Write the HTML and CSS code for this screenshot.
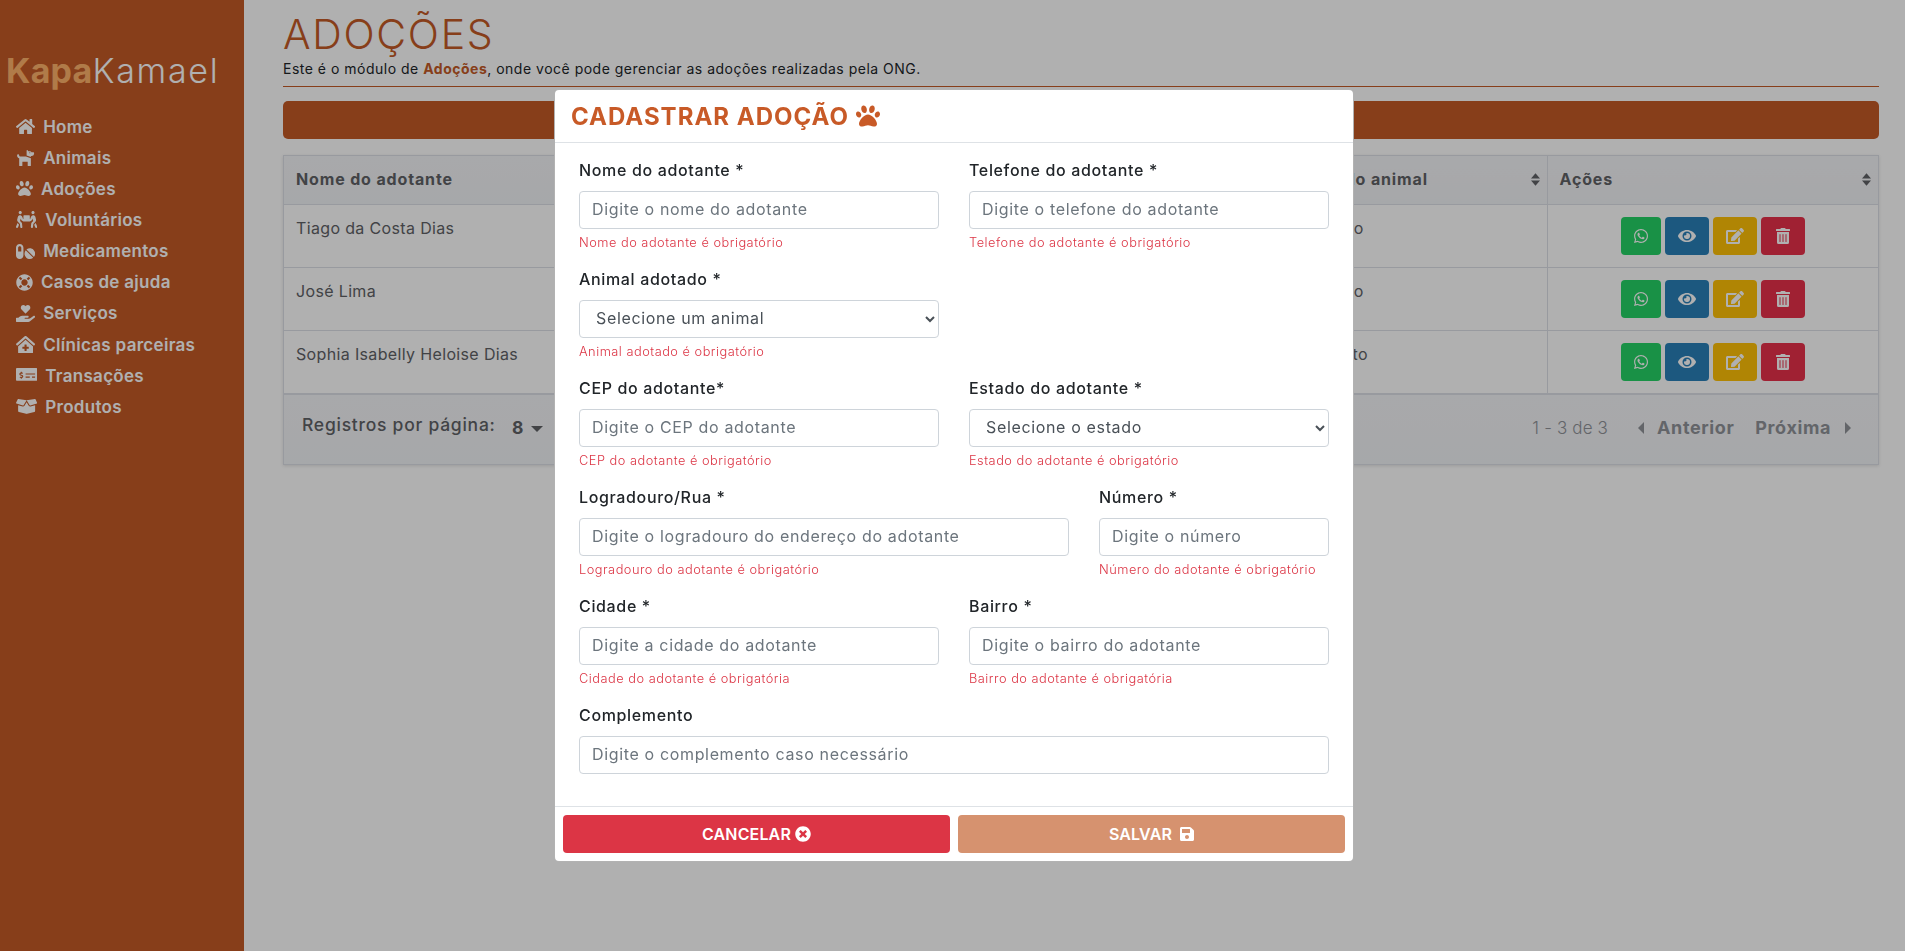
FILE: index.html
```html
<!DOCTYPE html>
<html lang="pt-BR">
<head>
  <meta charset="UTF-8" />
  <title>KapaKamael - Adoções</title>
  <link rel="stylesheet" href="styles.css">
</head>
<body>
  <svg class="sprite" xmlns="http://www.w3.org/2000/svg">
    <symbol id="i-paw" viewBox="0 0 512 512"><path d="M256 224c-79.41 0-192 122.76-192 200.25 0 34.9 26.81 55.75 71.74 55.75 48.84 0 81.09-25.08 120.26-25.08 39.51 0 71.85 25.08 120.26 25.08 44.93 0 71.74-20.85 71.74-55.75C448 346.76 335.41 224 256 224zm-147.28-12.61c-10.4-34.65-42.44-57.09-71.56-50.13-29.12 6.96-44.29 40.69-33.89 75.34 10.4 34.65 42.44 57.09 71.56 50.13 29.12-6.96 44.29-40.69 33.89-75.34zm84.72-20.78c30.94-8.14 46.42-49.94 34.58-93.36s-46.52-72.01-77.46-63.87-46.42 49.94-34.58 93.36c11.84 43.42 46.52 72.01 77.46 63.87zm281.39-29.34c-29.12-6.96-61.15 15.48-71.56 50.13-10.4 34.65 4.77 68.38 33.89 75.34 29.12 6.96 61.15-15.48 71.56-50.13 10.4-34.65-4.77-68.38-33.89-75.34zm-156.27 29.34c30.94 8.14 65.62-20.45 77.46-63.87 11.84-43.42-3.64-85.21-34.58-93.36s-65.62 20.45-77.46 63.87c-11.84 43.42 3.64 85.22 34.58 93.36z"/></symbol>
    <symbol id="i-home" viewBox="0 0 576 512"><path d="M280.37 148.26L96 300.11V464a16 16 0 0 0 16 16l112.06-.29a16 16 0 0 0 15.92-16V368a16 16 0 0 1 16-16h64a16 16 0 0 1 16 16v95.64a16 16 0 0 0 16 16.05L464 480a16 16 0 0 0 16-16V300L295.67 148.26a12.19 12.19 0 0 0-15.3 0zM571.6 251.47L488 182.56V44.05a12 12 0 0 0-12-12h-56a12 12 0 0 0-12 12v72.61L318.47 43a48 48 0 0 0-61 0L4.34 251.47a12 12 0 0 0-1.6 16.9l25.5 31A12 12 0 0 0 45.15 301l235.22-193.74a12.19 12.19 0 0 1 15.3 0L530.9 301a12 12 0 0 0 16.9-1.6l25.5-31a12 12 0 0 0-1.7-16.93z"/></symbol>
    <symbol id="i-dog" viewBox="0 0 576 512"><path d="M298.06,224,448,277.55V496a16,16,0,0,1-16,16H368a16,16,0,0,1-16-16V384H192V496a16,16,0,0,1-16,16H112a16,16,0,0,1-16-16V282.09C58.84,268.84,32,233.66,32,192a32,32,0,0,1,64,0,32.06,32.06,0,0,0,32,32ZM544,112v32a64,64,0,0,1-64,64H448v35.58L320,197.87V48c0-14.25,17.22-21.39,27.31-11.31L374.59,64h53.63c10.91,0,23.75,7.92,28.62,17.69L464,96h64A16,16,0,0,1,544,112Zm-112,0a16,16,0,1,0-16,16A16,16,0,0,0,432,112Z"/></symbol>
    <symbol id="i-people" viewBox="0 0 640 512"><path d="M128 96c26.5 0 48-21.5 48-48S154.5 0 128 0 80 21.5 80 48s21.5 48 48 48zm384 0c26.5 0 48-21.5 48-48S538.5 0 512 0s-48 21.5-48 48 21.5 48 48 48zm125.7 372.1l-44-110-41.1 46.4-2 18.2 27.7 69.2c5 12.5 17 20.1 29.7 20.1 4 0 8-.7 11.9-2.3 16.4-6.6 24.4-25.2 17.8-41.6zm-34.2-209.8L585 178.1c-4.6-20-18.6-36.8-37.5-44.9-18.5-8-39-6.7-56.1 3.3-22.7 13.4-39.7 34.5-48.1 59.4L432 229.8 416 240v-96c0-8.8-7.2-16-16-16H240c-8.8 0-16 7.2-16 16v96l-16.1-10.2-11.3-33.9c-8.3-25-25.4-46-48.1-59.4-17.2-10-37.6-11.3-56.1-3.3-18.9 8.1-32.9 24.9-37.5 44.9l-18.4 80.2c-4.6 20 .7 41.2 14.4 56.7l67.2 75.9 10.1 92.6C130 499.8 143.8 512 160 512c1.2 0 2.3-.1 3.5-.2 17.6-1.9 30.2-17.7 28.3-35.3l-10.1-92.8c-1.5-13-6.9-25.1-15.6-35l-43.3-49 17.6-70.3 6.8 20.4c4.1 12.5 11.9 23.4 24.5 32.6l51.1 32.5c4.6 2.9 12.1 4.6 17.2 5h160c5.1-.4 12.6-2.1 17.2-5l51.1-32.5c12.6-9.2 20.4-20 24.5-32.6l6.8-20.4 17.6 70.3-43.3 49c-8.7 9.9-14.1 22-15.6 35l-10.1 92.8c-1.9 17.6 10.8 33.4 28.3 35.3 1.2.1 2.3.2 3.5.2 16.1 0 30-12.1 31.8-28.5l10.1-92.6 67.2-75.9c13.6-15.5 19-36.7 14.4-56.7zM46.3 358.1l-44 110c-6.6 16.4 1.4 35 17.8 41.6 16.8 6.6 35.1-1.7 41.6-17.8l27.7-69.2-2-18.2-41.1-46.4z"/></symbol>
    <symbol id="i-pills" viewBox="0 0 576 512"><path d="M112 32C50.1 32 0 82.1 0 144v224c0 61.9 50.1 112 112 112s112-50.1 112-112V144c0-61.9-50.1-112-112-112zm48 224H64V144c0-26.5 21.5-48 48-48s48 21.5 48 48v112zm139.7-29.7c-3.5-3.5-9.4-3.1-12.3.8-45.3 62.5-40.4 150.1 15.9 206.4 56.3 56.3 143.9 61.2 206.4 15.9 4-2.9 4.3-8.8.8-12.3L299.7 226.3zm229.8-19c-56.3-56.3-143.9-61.2-206.4-15.9-4 2.9-4.3 8.8-.8 12.3l210.8 210.8c3.5 3.5 9.4 3.1 12.3-.8 45.3-62.6 40.5-150.1-15.9-206.4z"/></symbol>
    <symbol id="i-ring" viewBox="0 0 512 512"><path d="M256 8C119.033 8 8 119.033 8 256s111.033 248 248 248 248-111.033 248-248S392.967 8 256 8zm173.696 119.559l-63.399 63.399c-10.987-18.559-26.67-34.252-45.255-45.255l63.399-63.399a218.396 218.396 0 0 1 45.255 45.255zM256 352c-53.019 0-96-42.981-96-96s42.981-96 96-96 96 42.981 96 96-42.981 96-96 96zM127.559 82.304l63.399 63.399c-18.559 10.987-34.252 26.67-45.255 45.255l-63.399-63.399a218.372 218.372 0 0 1 45.255-45.255zM82.304 384.441l63.399-63.399c10.987 18.559 26.67 34.252 45.255 45.255l-63.399 63.399a218.396 218.396 0 0 1-45.255-45.255zm302.137 45.255l-63.399-63.399c18.559-10.987 34.252-26.67 45.255-45.255l63.399 63.399a218.403 218.403 0 0 1-45.255 45.255z"/></symbol>
    <symbol id="i-hand" viewBox="0 0 576 512"><path d="M275.3 250.5c7 7.4 18.4 7.4 25.5 0l108.9-114.2c31.6-33.2 29.8-88.2-5.6-118.8-30.8-26.7-76.7-21.9-104.9 7.7L288 36.9l-11.1-11.6C248.7-4.4 202.8-9.2 172 17.5c-35.3 30.6-37.2 85.6-5.6 118.8l108.9 114.2zm290 77.6c-11.8-10.7-30.2-10-42.6 0L430.3 402c-11.3 9.1-25.4 14-40 14H272c-8.8 0-16-7.2-16-16s7.2-16 16-16h78.3c15.9 0 30.7-10.9 33.3-26.6 3.3-20-12.1-37.4-31.6-37.4H192c-27 0-53.1 9.3-74.1 26.3L71.4 384H16c-8.8 0-16 7.2-16 16v96c0 8.8 7.2 16 16 16h356.8c14.5 0 28.6-4.9 40-14L564 377c15.2-12.1 16.4-35.3 1.3-48.9z"/></symbol>
    <symbol id="i-clinic" viewBox="0 0 576 512"><path d="M288 115L69.47 307.71c-1.62 1.46-3.69 2.14-5.47 3.35V496a16 16 0 0 0 16 16h416a16 16 0 0 0 16-16V311.1c-1.7-1.16-3.72-1.82-5.26-3.2zm96 261a8 8 0 0 1-8 8h-56v56a8 8 0 0 1-8 8h-48a8 8 0 0 1-8-8v-56h-56a8 8 0 0 1-8-8v-48a8 8 0 0 1 8-8h56v-56a8 8 0 0 1 8-8h48a8 8 0 0 1 8 8v56h56a8 8 0 0 1 8 8zm186.69-139.72l-255.94-226a39.85 39.85 0 0 0-53.45 0l-256 226a16 16 0 0 0-1.21 22.6L25.5 282.7a16 16 0 0 0 22.6 1.21L277.42 81.63a16 16 0 0 1 21.17 0L527.91 283.9a16 16 0 0 0 22.6-1.21l21.4-23.82a16 16 0 0 0-1.22-22.59z"/></symbol>
    <symbol id="i-money" viewBox="0 0 640 512"><path d="M608 32H32C14.33 32 0 46.33 0 64v320c0 17.67 14.33 32 32 32h576c17.67 0 32-14.33 32-32V64c0-17.67-14.33-32-32-32zM176 327.88V344c0 4.42-3.58 8-8 8h-16c-4.42 0-8-3.58-8-8v-16.29c-11.29-.58-22.27-4.52-31.37-11.35-3.9-2.93-4.1-8.77-.57-12.14l11.75-11.21c2.77-2.64 6.89-2.76 10.13-.73 3.87 2.42 8.26 3.72 12.82 3.72h28.11c6.5 0 11.8-5.92 11.8-13.19 0-5.95-3.61-11.19-8.77-12.73l-45-13.5c-18.59-5.58-31.58-23.42-31.58-43.39 0-24.52 19.05-44.44 42.67-45.07V152c0-4.42 3.58-8 8-8h16c4.42 0 8 3.58 8 8v16.29c11.29.58 22.27 4.51 31.37 11.35 3.9 2.93 4.1 8.77.57 12.14l-11.75 11.21c-2.77 2.64-6.89 2.76-10.13.73-3.87-2.43-8.26-3.72-12.82-3.72h-28.11c-6.5 0-11.8 5.92-11.8 13.19 0 5.95 3.61 11.19 8.77 12.73l45 13.5c18.59 5.58 31.58 23.42 31.58 43.39 0 24.53-19.05 44.44-42.67 45.07zM416 312c0 4.42-3.58 8-8 8H296c-4.42 0-8-3.58-8-8v-16c0-4.42 3.58-8 8-8h112c4.42 0 8 3.58 8 8v16zm160 0c0 4.42-3.58 8-8 8h-80c-4.42 0-8-3.58-8-8v-16c0-4.42 3.58-8 8-8h80c4.42 0 8 3.58 8 8v16zm0-96c0 4.42-3.58 8-8 8H296c-4.42 0-8-3.58-8-8v-16c0-4.42 3.58-8 8-8h272c4.42 0 8 3.58 8 8v16z"/></symbol>
    <symbol id="i-box" viewBox="0 0 640 512"><path d="M425.7 256c-16.9 0-32.8-9-41.4-23.4L320 126l-64.2 106.6c-8.7 14.5-24.6 23.5-41.5 23.5-4.5 0-9-.6-13.3-1.9L64 215v178c0 14.7 10 27.5 24.2 31l216.2 54.1c10.2 2.5 20.9 2.5 31 0L551.8 424c14.2-3.6 24.2-16.4 24.2-31V215l-137 39.1c-4.3 1.3-8.8 1.9-13.3 1.9zm212.6-112.2L586.8 41c-3.1-6.2-9.8-9.8-16.7-8.9L320 64l91.7 152.1c3.8 6.3 11.4 9.3 18.5 7.3l197.9-56.5c9.9-2.9 14.7-13.9 10.2-23.1zM53.2 41L1.7 143.8c-4.6 9.2.3 20.2 10.1 23l197.9 56.5c7.1 2 14.7-1 18.5-7.3L320 64 69.8 32.1c-6.9-.8-13.5 2.7-16.6 8.9z"/></symbol>
    <symbol id="i-whatsapp" viewBox="0 0 448 512"><path d="M380.9 97.1C339 55.1 283.2 32 223.9 32c-122.4 0-222 99.6-222 222 0 39.1 10.2 77.3 29.6 111L0 480l117.7-30.9c32.4 17.7 68.9 27 106.1 27h.1c122.3 0 224.1-99.6 224.1-222 0-59.3-25.2-115-67.1-157zm-157 341.6c-33.2 0-65.7-8.9-94-25.7l-6.7-4-69.8 18.3L72 359.2l-4.4-7c-18.5-29.4-28.2-63.3-28.2-98.2 0-101.7 82.8-184.5 184.6-184.5 49.3 0 95.6 19.2 130.4 54.1 34.8 34.9 56.2 81.2 56.1 130.5 0 101.8-84.9 184.6-186.6 184.6zm101.2-138.2c-5.5-2.8-32.8-16.2-37.9-18-5.1-1.9-8.8-2.8-12.5 2.8-3.7 5.6-14.3 18-17.6 21.8-3.2 3.7-6.5 4.2-12 1.4-32.6-16.3-54-29.1-75.5-66-5.7-9.8 5.7-9.1 16.3-30.3 1.8-3.7.9-6.9-.5-9.7-1.4-2.8-12.5-30.1-17.1-41.2-4.5-10.8-9.1-9.3-12.5-9.5-3.2-.2-6.9-.2-10.6-.2-3.7 0-9.7 1.4-14.8 6.9-5.1 5.6-19.4 19-19.4 46.3 0 27.3 19.9 53.7 22.6 57.4 2.8 3.7 39.1 59.7 94.8 83.8 35.2 15.2 49 16.5 66.6 13.9 10.7-1.6 32.8-13.4 37.4-26.4 4.6-13 4.6-24.1 3.2-26.4-1.3-2.5-5-3.9-10.5-6.6z"/></symbol>
    <symbol id="i-eye" viewBox="0 0 576 512"><path d="M572.52 241.4C518.29 135.59 410.93 64 288 64S57.68 135.64 3.48 241.41a32.35 32.35 0 0 0 0 29.19C57.71 376.41 165.07 448 288 448s230.32-71.64 284.52-177.41a32.35 32.35 0 0 0 0-29.19zM288 400a144 144 0 1 1 144-144 143.93 143.93 0 0 1-144 144zm0-240a95.31 95.31 0 0 0-25.31 3.79 47.85 47.85 0 0 1-66.9 66.9A95.78 95.78 0 1 0 288 160z"/></symbol>
    <symbol id="i-edit" viewBox="0 0 576 512"><path d="M402.6 83.2l90.2 90.2c3.8 3.8 3.8 10 0 13.8L274.4 405.6l-92.8 10.3c-12.4 1.4-22.9-9.1-21.5-21.5l10.3-92.8L388.8 83.2c3.8-3.8 10-3.8 13.8 0zm162-22.9l-48.8-48.8c-15.2-15.2-39.9-15.2-55.2 0l-35.4 35.4c-3.8 3.8-3.8 10 0 13.8l90.2 90.2c3.8 3.8 10 3.8 13.8 0l35.4-35.4c15.2-15.3 15.2-40 0-55.2zM384 346.2V448H64V128h229.8c3.2 0 6.2-1.3 8.5-3.5l40-40c7.6-7.6 2.2-20.5-8.5-20.5H48C21.5 64 0 85.5 0 112v352c0 26.5 21.5 48 48 48h352c26.5 0 48-21.5 48-48V306.2c0-10.7-12.9-16-20.5-8.5l-40 40c-2.2 2.3-3.5 5.3-3.5 8.5z"/></symbol>
    <symbol id="i-trash" viewBox="0 0 448 512"><path d="M32 464a48 48 0 0 0 48 48h288a48 48 0 0 0 48-48V128H32zm272-256a16 16 0 0 1 32 0v224a16 16 0 0 1-32 0zm-96 0a16 16 0 0 1 32 0v224a16 16 0 0 1-32 0zm-96 0a16 16 0 0 1 32 0v224a16 16 0 0 1-32 0zM432 32H312l-9.4-18.7A24 24 0 0 0 281.1 0H166.8a23.72 23.72 0 0 0-21.4 13.3L136 32H16A16 16 0 0 0 0 48v32a16 16 0 0 0 16 16h416a16 16 0 0 0 16-16V48a16 16 0 0 0-16-16z"/></symbol>
    <symbol id="i-times" viewBox="0 0 512 512"><path d="M256 8C119 8 8 119 8 256s111 248 248 248 248-111 248-248S393 8 256 8zm121.6 313.1c4.7 4.7 4.7 12.3 0 17L338 377.6c-4.7 4.7-12.3 4.7-17 0L256 312l-65.1 65.6c-4.7 4.7-12.3 4.7-17 0L134.4 338c-4.7-4.7-4.7-12.3 0-17l65.6-65-65.6-65.1c-4.7-4.7-4.7-12.3 0-17l39.6-39.6c4.7-4.7 12.3-4.7 17 0l65 65.7 65.1-65.6c4.7-4.7 12.3-4.7 17 0l39.6 39.6c4.7 4.7 4.7 12.3 0 17L312 256l65.6 65.1z"/></symbol>
    <symbol id="i-save" viewBox="0 0 448 512"><path d="M433.941 129.941l-83.882-83.882A48 48 0 0 0 316.118 32H48C21.49 32 0 53.49 0 80v352c0 26.51 21.49 48 48 48h352c26.51 0 48-21.49 48-48V163.882a48 48 0 0 0-14.059-33.941zM224 416c-35.346 0-64-28.654-64-64 0-35.346 28.654-64 64-64s64 28.654 64 64c0 35.346-28.654 64-64 64zm96-304.52V212c0 6.627-5.373 12-12 12H76c-6.627 0-12-5.373-12-12V108c0-6.627 5.373-12 12-12h228.52c3.183 0 6.235 1.264 8.485 3.515l3.48 3.48A11.996 11.996 0 0 1 320 111.48z"/></symbol>
    <symbol id="i-sort" viewBox="0 0 10 14"><path d="M5 0l5 6H0zM5 14L0 8h10z"/></symbol>
  </svg>

  <div class="layout">
    <aside class="sidebar">
      <div class="logo"><strong>Kapa</strong>Kamael</div>
      <nav class="menu">
        <a class="menu-item"><svg class="ico w-9"><use href="#i-home"/></svg>Home</a>
        <a class="menu-item"><svg class="ico w-9"><use href="#i-dog"/></svg>Animais</a>
        <a class="menu-item"><svg class="ico w-8"><use href="#i-paw"/></svg>Adoções</a>
        <a class="menu-item"><svg class="ico w-10"><use href="#i-people"/></svg>Voluntários</a>
        <a class="menu-item"><svg class="ico w-9"><use href="#i-pills"/></svg>Medicamentos</a>
        <a class="menu-item"><svg class="ico w-8"><use href="#i-ring"/></svg>Casos de ajuda</a>
        <a class="menu-item"><svg class="ico w-9"><use href="#i-hand"/></svg>Serviços</a>
        <a class="menu-item"><svg class="ico w-9"><use href="#i-clinic"/></svg>Clínicas parceiras</a>
        <a class="menu-item"><svg class="ico w-10"><use href="#i-money"/></svg>Transações</a>
        <a class="menu-item"><svg class="ico w-10"><use href="#i-box"/></svg>Produtos</a>
      </nav>
    </aside>

    <main class="content">
      <h1 class="page-title">ADOÇÕES</h1>
      <p class="page-sub">Este é o módulo de <strong>Adoções</strong>, onde você pode gerenciar as adoções realizadas pela ONG.</p>
      <hr class="page-line">
      <button class="btn-new">CADASTRAR ADOÇÃO</button>

      <div class="table-wrap">
        <table class="grid">
          <thead>
            <tr>
              <th class="col-name">Nome do adotante</th>
              <th class="col-animal">Nome do animal<svg class="sort"><use href="#i-sort"/></svg></th>
              <th class="col-actions">Ações<svg class="sort"><use href="#i-sort"/></svg></th>
            </tr>
          </thead>
          <tbody>
            <tr>
              <td>Tiago da Costa Dias</td>
              <td>Cachorro</td>
              <td>
                <div class="actions">
                  <a class="act act-wpp"><svg class="ico w-7"><use href="#i-whatsapp"/></svg></a>
                  <a class="act act-view"><svg class="ico w-9"><use href="#i-eye"/></svg></a>
                  <a class="act act-edit"><svg class="ico w-9"><use href="#i-edit"/></svg></a>
                  <a class="act act-del"><svg class="ico w-7"><use href="#i-trash"/></svg></a>
                </div>
              </td>
            </tr>
            <tr>
              <td>José Lima</td>
              <td>Cachorro</td>
              <td>
                <div class="actions">
                  <a class="act act-wpp"><svg class="ico w-7"><use href="#i-whatsapp"/></svg></a>
                  <a class="act act-view"><svg class="ico w-9"><use href="#i-eye"/></svg></a>
                  <a class="act act-edit"><svg class="ico w-9"><use href="#i-edit"/></svg></a>
                  <a class="act act-del"><svg class="ico w-7"><use href="#i-trash"/></svg></a>
                </div>
              </td>
            </tr>
            <tr>
              <td>Sophia Isabelly Heloise Dias</td>
              <td>Cão preto</td>
              <td>
                <div class="actions">
                  <a class="act act-wpp"><svg class="ico w-7"><use href="#i-whatsapp"/></svg></a>
                  <a class="act act-view"><svg class="ico w-9"><use href="#i-eye"/></svg></a>
                  <a class="act act-edit"><svg class="ico w-9"><use href="#i-edit"/></svg></a>
                  <a class="act act-del"><svg class="ico w-7"><use href="#i-trash"/></svg></a>
                </div>
              </td>
            </tr>
          </tbody>
        </table>
        <div class="pager">
          <div class="pager-size">Registros por página: <b>8</b><i class="caret-down"></i></div>
          <div class="pager-nav">
            <span class="pager-info">1 - 3 de 3</span>
            <i class="caret-left"></i><span class="pager-link">Anterior</span>
            <span class="pager-link next">Próxima</span><i class="caret-right"></i>
          </div>
        </div>
      </div>
    </main>
  </div>

  <div class="backdrop"></div>

  <div class="modal">
    <header class="modal-head">
      <h2>CADASTRAR ADOÇÃO</h2>
      <svg class="ico w-8"><use href="#i-paw"/></svg>
    </header>
    <form class="modal-body">
      <div class="field span-6">
        <label>Nome do adotante *</label>
        <input type="text" placeholder="Digite o nome do adotante">
        <small>Nome do adotante é obrigatório</small>
      </div>
      <div class="field span-6">
        <label>Telefone do adotante *</label>
        <input type="text" placeholder="Digite o telefone do adotante">
        <small>Telefone do adotante é obrigatório</small>
      </div>
      <div class="field span-6">
        <label>Animal adotado *</label>
        <select><option>Selecione um animal</option></select>
        <small>Animal adotado é obrigatório</small>
      </div>
      <div class="field span-6 new-row">
        <label>CEP do adotante*</label>
        <input type="text" placeholder="Digite o CEP do adotante">
        <small>CEP do adotante é obrigatório</small>
      </div>
      <div class="field span-6">
        <label>Estado do adotante *</label>
        <select><option>Selecione o estado</option></select>
        <small>Estado do adotante é obrigatório</small>
      </div>
      <div class="field span-8">
        <label>Logradouro/Rua *</label>
        <input type="text" placeholder="Digite o logradouro do endereço do adotante">
        <small>Logradouro do adotante é obrigatório</small>
      </div>
      <div class="field span-4">
        <label>Número *</label>
        <input type="text" placeholder="Digite o número">
        <small>Número do adotante é obrigatório</small>
      </div>
      <div class="field span-6">
        <label>Cidade *</label>
        <input type="text" placeholder="Digite a cidade do adotante">
        <small>Cidade do adotante é obrigatória</small>
      </div>
      <div class="field span-6">
        <label>Bairro *</label>
        <input type="text" placeholder="Digite o bairro do adotante">
        <small>Bairro do adotante é obrigatória</small>
      </div>
      <div class="field span-12">
        <label>Complemento</label>
        <input type="text" placeholder="Digite o complemento caso necessário">
      </div>
    </form>
    <footer class="modal-foot">
      <button class="btn btn-cancel">CANCELAR<svg class="ico w-8"><use href="#i-times"/></svg></button>
      <button class="btn btn-save">SALVAR<svg class="ico w-7 gap"><use href="#i-save"/></svg></button>
    </footer>
  </div>
</body>
</html>
```

FILE: styles.css
```css
* {
  box-sizing: border-box;
}
body {
  margin: 0;
  font-family: Inter, "Open Sans", sans-serif;
  font-size: 16px;
  color: #212529;
  background: #fff;
  overflow: hidden;
}
.sprite {
  display: none;
}
.ico {
  height: 1em;
  fill: currentColor;
  flex: none;
}
.w-7 { width: .875em; }
.w-8 { width: 1em; }
.w-9 { width: 1.125em; }
.w-10 { width: 1.25em; }

.layout {
  display: flex;
  min-height: 100vh;
}

/* sidebar */
.sidebar {
  width: 244px;
  flex: none;
  background: #c45a27;
  color: #fff;
}
.logo {
  padding: 49px 0 0 6px;
  height: 111px;
  font-size: 34px;
  line-height: 44px;
  font-weight: 300;
  letter-spacing: 1.7px;
}
.logo strong {
  font-weight: 700;
  letter-spacing: .2px;
  color: #ffb26b;
}
.menu {
  display: flex;
  flex-direction: column;
  padding-left: 16px;
}
.menu-item {
  display: flex;
  align-items: center;
  gap: 8px;
  height: 31.15px;
  font-size: 17px;
  font-weight: 600;
  letter-spacing: .3px;
}

/* page */
.content {
  flex: 1;
  padding: 0 26px 0 39px;
}
.page-title {
  margin: 0;
  padding-top: 10px;
  font-size: 41px;
  line-height: 48px;
  font-weight: 300;
  letter-spacing: 1.7px;
  color: #c45a27;
}
.page-sub {
  margin: 0;
  font-size: 14px;
  line-height: 21px;
  letter-spacing: .5px;
  color: #212529;
}
.page-sub strong {
  color: #c45a27;
}
.page-line {
  margin: 7px 0 14px;
  border: 0;
  border-top: 1px solid #c45a27;
}
.btn-new {
  display: block;
  width: 100%;
  height: 38px;
  border: 0;
  border-radius: 5px;
  background: #c45a27;
  color: #fff;
  font-family: inherit;
  font-size: 16px;
  font-weight: 600;
}

.table-wrap {
  margin-top: 16px;
  border: 1px solid #dcdfe6;
  box-shadow: 0 1px 3px rgba(0, 0, 0, .12);
}
.grid {
  width: 100%;
  table-layout: fixed;
  border-collapse: collapse;
  color: #606266;
  letter-spacing: .35px;
}
.col-animal { width: 269px; }
.col-actions { width: 331px; }
.grid th {
  position: relative;
  height: 48px;
  padding: 0 12px 2px;
  text-align: left;
  font-weight: 700;
  letter-spacing: .85px;
  color: #606266;
  background: linear-gradient(#f4f5f8, #f1f3f6);
  border-bottom: 1px solid #dcdfe6;
  border-left: 1px solid #dcdfe6;
}
.grid td {
  height: 63px;
  padding: 11px 12px 12px;
  vertical-align: top;
  line-height: 24px;
  border-bottom: 1px solid #dcdfe6;
  border-left: 1px solid #dcdfe6;
}
.grid td:last-child {
  padding: 12px 12px 12px;
}
.grid th:first-child,
.grid td:first-child {
  border-left: 0;
}
.sort {
  position: absolute;
  right: 7px;
  top: 17px;
  width: 9px;
  height: 13px;
  fill: #606266;
}
.actions {
  display: flex;
  justify-content: center;
  gap: 4px;
}
.act {
  display: flex;
  align-items: center;
  justify-content: center;
  height: 38px;
  width: 44px;
  border-radius: 4px;
  color: #fff;
}
.act-wpp { width: 40px; background: #25d366; }
.act-view { background: #2980b9; }
.act-edit { background: #ffc107; }
.act-del { background: #e8304a; }

.pager {
  display: flex;
  justify-content: space-between;
  align-items: center;
  height: 70px;
  padding: 0 27px 0 18px;
  border-top: 1px solid #dcdfe6;
  background: linear-gradient(#f4f5f8, #f1f3f6);
  color: #606266;
}
.pager-size {
  font-size: 17.5px;
  font-weight: 500;
  letter-spacing: .75px;
  margin-top: -9px;
}
.pager-size b {
  margin-left: 11px;
  font-size: 17.5px;
  position: relative;
  top: 3px;
}
.caret-down {
  display: inline-block;
  margin-left: 7px;
  vertical-align: middle;
  border: 6px solid transparent;
  border-top-color: #606266;
  border-bottom-width: 0;
  position: relative;
  top: 3px;
}
.pager-nav {
  display: flex;
  align-items: center;
  color: #909399;
  font-size: 18px;
  margin-top: -3px;
}
.pager-info {
  font-size: 17px;
  font-weight: 300;
  letter-spacing: .15px;
  margin-right: 30px;
}
.pager-link {
  font-weight: 700;
  letter-spacing: .6px;
  margin-left: 13px;
}
.pager-link.next {
  margin-left: 21px;
  margin-right: 14px;
}
.caret-left,
.caret-right {
  border: 6px solid transparent;
  border-left-width: 0;
  border-right: 6px solid #909399;
}
.caret-right {
  border-right-width: 0;
  border-left: 6px solid #909399;
}

/* modal */
.backdrop {
  position: fixed;
  inset: 0;
  background: rgba(0, 0, 0, .31);
}
.modal {
  position: absolute;
  top: 89px;
  left: 554px;
  width: 800px;
  height: 773px;
  display: flex;
  flex-direction: column;
  background: #fff;
  border: 1px solid rgba(0, 0, 0, .3);
  border-radius: 5px;
}
.modal-head {
  display: flex;
  align-items: center;
  gap: 7px;
  height: 53px;
  padding-left: 16px;
  border-bottom: 1px solid #dee2e6;
  color: #c85a27;
  font-size: 24px;
}
.modal-head h2 {
  margin: 0;
  font-size: 24px;
  font-weight: 700;
  letter-spacing: 1px;
}
.modal-body {
  flex: 1;
  display: grid;
  grid-template-columns: repeat(12, 1fr);
  grid-auto-rows: 94px;
  column-gap: 30px;
  row-gap: 15px;
  padding: 15px 24px 0;
}
.span-6 { grid-column: span 6; }
.span-8 { grid-column: span 8; }
.span-4 { grid-column: span 4; }
.span-12 { grid-column: span 12; }
.new-row { grid-column: 1 / span 6; }
.field label {
  display: block;
  margin-bottom: 9px;
  line-height: 24px;
  font-weight: 500;
  letter-spacing: .65px;
}
.field input,
.field select {
  display: block;
  width: 100%;
  height: 38px;
  padding: 0 12px 2px;
  border: 1px solid #ced4da;
  border-radius: 4px;
  background: #fff;
  font-family: inherit;
  font-size: 16px;
  letter-spacing: .65px;
  color: #495057;
}
.field input::placeholder {
  color: #6c757d;
}
.field small {
  display: block;
  margin-top: 4px;
  font-size: 12.8px;
  font-weight: 300;
  line-height: 19px;
  letter-spacing: .5px;
  color: #dc3545;
}
.modal-foot {
  display: flex;
  gap: 8px;
  height: 55px;
  padding: 8px;
  border-top: 1px solid #dee2e6;
}
.btn {
  flex: 1;
  display: flex;
  align-items: center;
  justify-content: center;
  gap: 4px;
  height: 38px;
  border: 0;
  border-radius: 4px;
  color: #fff;
  font-family: inherit;
  font-size: 16px;
  font-weight: 600;
  letter-spacing: .15px;
}
.btn .gap {
  margin-left: 4px;
}
.btn-cancel { background: #dc3545; }
.btn-save { background: #d6926f; }
```
